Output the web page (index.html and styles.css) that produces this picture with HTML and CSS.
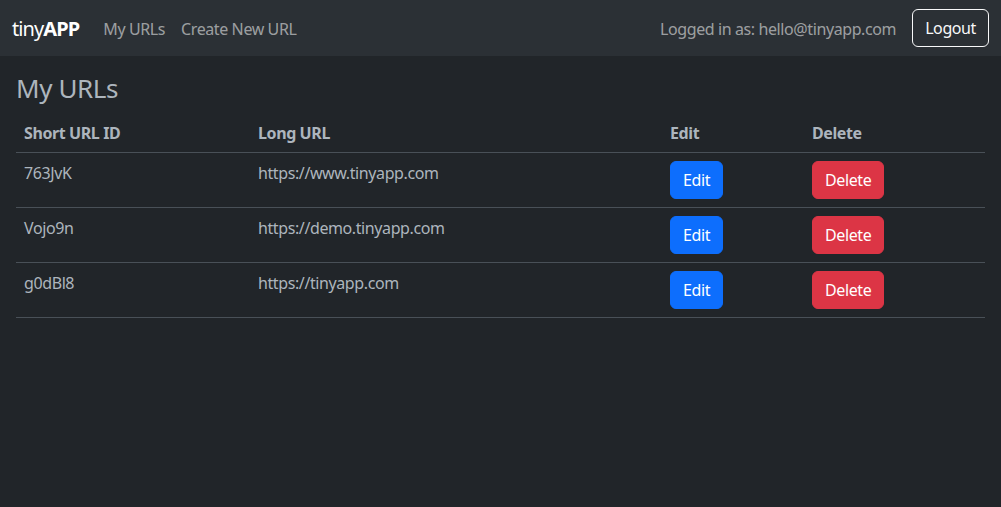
FILE: index.html
```html
<!DOCTYPE html>
<html lang="en">
<head>
<meta charset="utf-8">
<title>TinyApp</title>
<link rel="stylesheet" href="styles.css">
</head>
<body>
<nav class="navbar">
  <div class="nav-left">
    <a class="brand" href="#">tiny<b>APP</b></a>
    <a class="nav-link" href="#">My URLs</a>
    <a class="nav-link" href="#">Create New URL</a>
  </div>
  <div class="nav-right">
    <span class="user">Logged in as: hello@tinyapp.com</span>
    <button class="btn btn-outline">Logout</button>
  </div>
</nav>
<main class="container">
  <h1 class="title">My URLs</h1>
  <table class="table">
    <colgroup>
      <col class="c1"><col class="c2"><col class="c3"><col class="c4">
    </colgroup>
    <thead>
      <tr><th>Short URL ID</th><th>Long URL</th><th>Edit</th><th>Delete</th></tr>
    </thead>
    <tbody>
      <tr><td>763JvK</td><td>https://www.tinyapp.com</td><td><button class="btn btn-primary">Edit</button></td><td><button class="btn btn-danger">Delete</button></td></tr>
      <tr><td>Vojo9n</td><td>https://demo.tinyapp.com</td><td><button class="btn btn-primary">Edit</button></td><td><button class="btn btn-danger">Delete</button></td></tr>
      <tr><td>g0dBl8</td><td>https://tinyapp.com</td><td><button class="btn btn-primary">Edit</button></td><td><button class="btn btn-danger">Delete</button></td></tr>
    </tbody>
  </table>
</main>
</body>
</html>
```
FILE: styles.css
```css
* { box-sizing: border-box; }
html, body { margin: 0; }
body {
  background: #212529;
  color: #dee2e6;
  font-family: "Noto Sans", "Open Sans", sans-serif;
  font-size: 16px;
  line-height: 1.5;
  letter-spacing: -0.4px;
}
.navbar {
  height: 56px;
  background: #2b3035;
  display: flex;
  align-items: center;
  justify-content: space-between;
  padding: 0 12px;
}
.nav-left, .nav-right { display: flex; align-items: center; padding-top: 2px; }
.brand {
  color: #fff;
  text-decoration: none;
  font-size: 20px;
  letter-spacing: -0.9px;
  margin-right: 16px;
}
.brand b { font-weight: 700; }
.nav-link {
  color: rgba(255,255,255,.55);
  text-decoration: none;
  padding: 8px;
}
.user {
  color: rgba(255,255,255,.55);
  margin-right: 16px;
}
.btn {
  font-family: inherit;
  font-size: 16px;
  line-height: 1.5;
  letter-spacing: inherit;
  padding: 6px 12px;
  border-radius: 6px;
  border: 1px solid transparent;
  color: #fff;
  cursor: pointer;
}
.btn-outline {
  background: transparent;
  border-color: #f8f9fa;
  color: #f8f9fa;
  margin-top: -2px;
}
.btn-primary { background: #0d6efd; border-color: #0d6efd; }
.btn-danger { background: #dc3545; border-color: #dc3545; }
.container { padding: 0 16px; }
.title {
  margin: 17px 0 8px;
  font-size: 26px;
  font-weight: 400;
  line-height: 1.2;
  color: #adb5bd;
}
.table {
  width: 100%;
  border-collapse: collapse;
  color: #adb5bd;
}
.c1 { width: 234px; }
.c2 { width: 412px; }
.c3 { width: 142px; }
.table th, .table td {
  text-align: left;
  vertical-align: top;
  padding: 8px;
  border-bottom: 1px solid #495057;
}
.table th { font-weight: 700; padding: 9px 8px 7px; }
.table td { padding: 8px; }
.table td .btn { display: block; }
```
